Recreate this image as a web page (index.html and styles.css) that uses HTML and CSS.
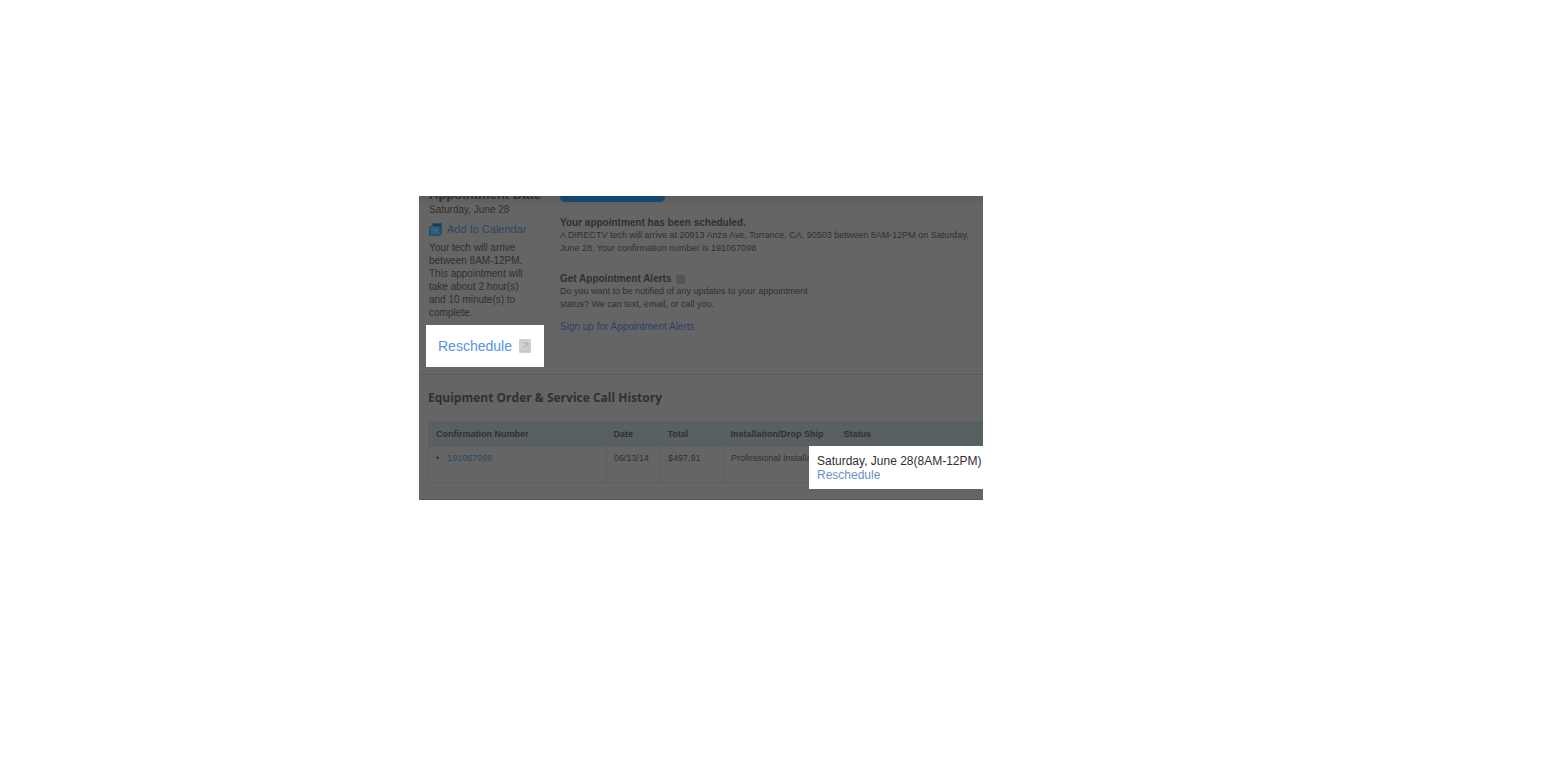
FILE: index.html
```html
<!DOCTYPE html>
<html lang="en">
<head>
<meta charset="utf-8">
<title>Appointment details</title>
<link rel="stylesheet" href="styles.css">
</head>
<body>
<main class="panel">
  <section class="summary">
    <aside class="visit">
      <h2 class="visit-title">Appointment Date</h2>
      <p class="visit-date">Saturday, June 28</p>
      <a class="calendar" href="#">
        <svg class="calendar-icon" viewBox="0 0 13 13" aria-hidden="true"><path d="M3 0h10v10l-2 3H0V3h3z" fill="#24516b"/><path d="M4 1h8v2H4z" fill="#183d52"/><path d="M2 4h8v7H2z" fill="#2e617c"/><path d="M4 6h4v3H4z" fill="#38677f"/></svg>
        Add to Calendar
      </a>
      <p class="visit-note">Your tech will arrive<br>between 8AM-12PM.<br>This appointment will<br>take about 2 hour(s)<br>and 10 minute(s) to<br>complete.</p>
      <div class="spotlight">
        <a href="#">Reschedule</a>
        <svg class="note-icon" viewBox="0 0 12 14" aria-hidden="true"><rect width="12" height="14" rx="1" fill="#d0d0d0"/><path d="M4 4h5v5M4 9l5-5" fill="none" stroke="#adadad"/><path d="M1 12h10" stroke="#bcbcbc"/></svg>
      </div>
    </aside>
    <div class="details">
      <div class="action"></div>
      <div class="message">
        <h3>Your appointment has been scheduled.</h3>
        <p>A DIRECTV tech will arrive at 20913 Anza Ave, Torrance, CA, 90503 between 8AM-12PM on Saturday,<br>June 28. Your confirmation number is 191067098</p>
      </div>
      <div class="alerts">
        <h3>Get Appointment Alerts <span class="help"></span></h3>
        <p>Do you want to be notified of any updates to your appointment<br>status? We can text, email, or call you.</p>
      </div>
      <a class="signup" href="#">Sign up for Appointment Alerts</a>
    </div>
  </section>
  <section class="history">
    <h2>Equipment Order &amp; Service Call History</h2>
    <table>
      <thead><tr><th class="number">Confirmation Number</th><th class="date">Date</th><th class="total">Total</th><th class="install">Installation/Drop Ship</th><th>Status</th></tr></thead>
      <tbody><tr><td><span class="bullet">•</span><a href="#">191067098</a></td><td>06/13/14</td><td>$497.91</td><td>Professional Installation</td><td></td></tr></tbody>
    </table>
  </section>
  <div class="status-card">
    <p>Saturday, June 28(8AM-12PM)</p>
    <a href="#">Reschedule</a>
  </div>
</main>
</body>
</html>
```
FILE: styles.css
```css
* { box-sizing: border-box; }
body {
  margin: 0;
  padding-top: 196px;
  display: grid;
  grid-template-columns: 419fr 564fr 585fr;
  background: #fff;
  color: #303030;
  font-family: "Liberation Sans", Arial, sans-serif;
}
h2, h3, p { margin: 0; }
a { text-decoration: none; color: #2b4763; }
.panel {
  grid-column: 2;
  position: relative;
  overflow: hidden;
  background: #656565;
  border-bottom: 1px solid #595959;
}
.summary {
  display: grid;
  grid-template-columns: 141px 1fr;
  background: linear-gradient(#5c5c5c, #656565 10px);
  border-bottom: 1px solid #595959;
  padding-bottom: 7px;
}
.visit { font-size: 10px; line-height: 13px; padding-left: 10px; }
.visit-title { font-size: 13px; line-height: 16px; height: 16px; margin-top: -9px; white-space: nowrap; }
.visit-date { font-size: 10px; margin-bottom: 6px; }
.calendar { display: flex; align-items: center; gap: 5px; font-size: 11px; line-height: 14px; margin-bottom: 5px; }
.calendar-icon { width: 13px; height: 13px; }
.spotlight {
  display: flex;
  align-items: center;
  gap: 7px;
  width: 118px;
  height: 42px;
  margin: 6px 0 0 -3px;
  padding-left: 12px;
  background: #fff;
  font-size: 14px;
}
.spotlight a { color: #5594df; }
.note-icon { width: 12px; height: 14px; }
.details { font-size: 9px; line-height: 13px; white-space: nowrap; }
.details h3 { font-size: 10px; line-height: 13px; }
.action { width: 105px; height: 6px; background: #16476f; border-radius: 0 0 5px 5px; }
.message { margin-top: 14px; }
.alerts { margin-top: 17px; }
.help { display: inline-block; width: 9px; height: 9px; margin-left: 2px; background: #545454; border-radius: 2px; vertical-align: middle; }
.signup { display: block; margin-top: 9px; font-size: 10px; color: #303f68; }
.history { padding: 14px 0 16px 9px; }
.history h2 { font: bold 12px/18px "Open Sans", sans-serif; margin-bottom: 14px; }
table { width: 100%; table-layout: fixed; border-collapse: collapse; font-size: 9px; line-height: 12px; white-space: nowrap; border-left: 1px solid #5d5d5d; }
th { height: 26px; padding: 0 0 0 7px; text-align: left; background: #586062; }
td { height: 35px; padding: 5px 0 0 7px; vertical-align: top; border-right: 1px solid #5d5d5d; border-bottom: 1px solid #5d5d5d; overflow: hidden; }
.number { width: 178px; }
.date { width: 54px; }
.total { width: 63px; }
.install { width: 113px; }
.bullet { margin-right: 8px; }
.status-card {
  position: absolute;
  right: 0;
  bottom: 10px;
  width: 174px;
  height: 43px;
  padding: 8px 0 0 8px;
  background: #fff;
  font-size: 12px;
  line-height: 14px;
  white-space: nowrap;
}
.status-card a { display: block; color: #6592c6; }
```
